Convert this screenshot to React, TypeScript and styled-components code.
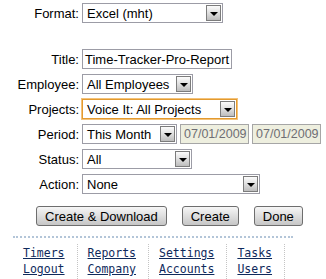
import React from 'react'
import styled, { createGlobalStyle } from 'styled-components'

const GlobalStyle = createGlobalStyle`
  html, body {
    margin: 0;
    padding: 0;
    background: #fff;
  }
  body {
    font-family: "Liberation Sans", Arial, sans-serif;
    font-size: 13px;
    color: #000;
  }
`

const Page = styled.div`
  width: 326px;
  height: 279px;
  overflow: hidden;
  padding-top: 3px;
  box-sizing: border-box;
`

const Fields = styled.div`
  display: grid;
  grid-template-columns: 79px auto;
  column-gap: 3px;
  row-gap: 5px;
  align-items: center;
  justify-items: start;
`

const Label = styled.label`
  justify-self: end;
  white-space: nowrap;
`

const Spacer = styled.div`
  grid-column: 1 / -1;
  height: 16px;
`

const SelectBox = styled.div<{ $w: number; $focus?: boolean }>`
  display: flex;
  align-items: center;
  justify-content: space-between;
  width: ${(p) => p.$w}px;
  height: 20px;
  box-sizing: border-box;
  padding-left: 4px;
  background: #fff;
  border: 1px solid ${(p) => (p.$focus ? '#e39a2f' : '#9c9ca6')};
  box-shadow: ${(p) => (p.$focus ? '0 0 0 1px #f3c27a' : 'none')};
  white-space: nowrap;
`

const Arrow = styled.span`
  display: flex;
  align-items: center;
  justify-content: center;
  width: 15px;
  height: 16px;
  margin-right: 1px;
  box-sizing: border-box;
  border: 1px solid #7c7c7c;
  background: linear-gradient(#fbfbfb, #e2e2e2 45%, #bdbdbd);
  &::after {
    content: '';
    margin-top: 2px;
    border-left: 4px solid transparent;
    border-right: 4px solid transparent;
    border-top: 4px solid #000;
  }
`

const TextInput = styled.div<{ $w: number }>`
  width: ${(p) => p.$w}px;
  height: 20px;
  box-sizing: border-box;
  padding: 2px 0 0 2px;
  border: 1px solid #9c9ca6;
  white-space: nowrap;
  overflow: hidden;
`

const DateInput = styled.div`
  width: 69px;
  height: 20px;
  box-sizing: border-box;
  padding: 2px 0 0 3px;
  border: 1px solid #a6a6a6;
  background: #eeefdf;
  color: #6e6e74;
  font-size: 12.5px;
  white-space: nowrap;
  overflow: hidden;
`

const Inline = styled.div`
  display: flex;
  gap: 3px;
`

const Buttons = styled.div`
  display: flex;
  gap: 15px;
  margin: 12px 0 0 36px;
`

const Button = styled.button`
  height: 20px;
  padding: 0 8px;
  font-family: "Liberation Sans", Arial, sans-serif;
  font-size: 13px;
  color: #000;
  border: 1px solid #6e6e6e;
  border-radius: 3px;
  background: linear-gradient(#f6f6f6, #dcdcdc 55%, #c6c6c6);
`

const Rule = styled.div`
  width: 280px;
  margin: 10px 0 0 13px;
  border-top: 2px dotted #b3c5d8;
`

const Nav = styled.nav`
  display: grid;
  grid-template-columns: repeat(4, auto);
  justify-content: start;
  margin: 6px 0 0 13px;
`

const NavCol = styled.div`
  display: flex;
  flex-direction: column;
  padding: 1px 12px 4px 10px;
  border-right: 1px dotted #c4c4c4;
`

const NavLink = styled.a`
  font-family: "DejaVu Sans Mono", monospace;
  font-size: 11.5px;
  line-height: 16px;
  color: #0f2a5c;
  text-decoration: underline;
`

const Select = ({ w, value, focus }: { w: number; value: string; focus?: boolean }) => (
  <SelectBox $w={w} $focus={focus}>
    <span>{value}</span>
    <Arrow />
  </SelectBox>
)

const NAV = [
  ['Timers', 'Logout'],
  ['Reports', 'Company'],
  ['Settings', 'Accounts'],
  ['Tasks', 'Users'],
]

const App = () => (
  <Page>
    <GlobalStyle />
    <Fields>
      <Label>Format:</Label>
      <Select w={141} value="Excel (mht)" />
      <Spacer />
      <Label>Title:</Label>
      <TextInput $w={150}>Time-Tracker-Pro-Report</TextInput>
      <Label>Employee:</Label>
      <Select w={111} value="All Employees" />
      <Label>Projects:</Label>
      <Select w={155} value="Voice It: All Projects" focus />
      <Label>Period:</Label>
      <Inline>
        <Select w={95} value="This Month" />
        <DateInput>07/01/2009</DateInput>
        <DateInput>07/01/2009</DateInput>
      </Inline>
      <Label>Status:</Label>
      <Select w={110} value="All" />
      <Label>Action:</Label>
      <Select w={178} value="None" />
    </Fields>
    <Buttons>
      <Button>Create &amp; Download</Button>
      <Button>Create</Button>
      <Button>Done</Button>
    </Buttons>
    <Rule />
    <Nav>
      {NAV.map((col) => (
        <NavCol key={col[0]}>
          {col.map((name) => (
            <NavLink key={name} href="#">
              {name}
            </NavLink>
          ))}
        </NavCol>
      ))}
    </Nav>
  </Page>
)

export default App
